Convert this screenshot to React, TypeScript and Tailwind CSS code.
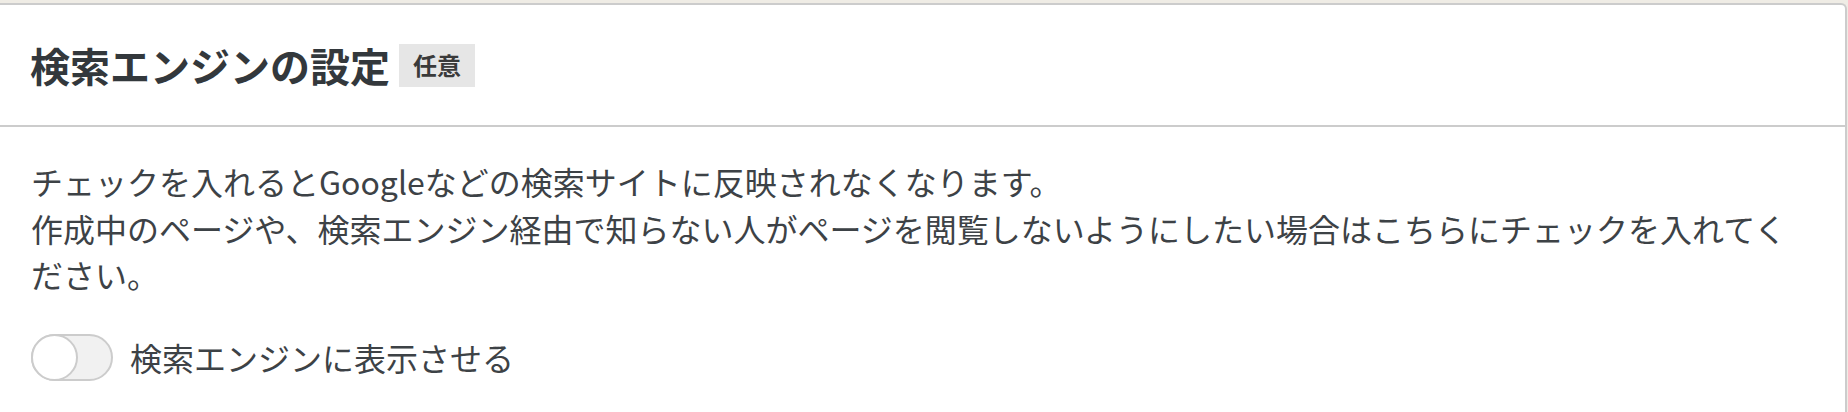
import { useState } from "react";

export default function App() {
  const [visible, setVisible] = useState(false);

  return (
    <div className="min-h-screen bg-white">
      <div className="bg-[#efece5] pt-[3px]">
        <section
          className="-ml-[2px] mr-[1px] rounded-tr-[6px] border-2 border-b-0 border-[#cccccc] bg-white text-[#3d4246]"
          style={{ fontFamily: '"Noto Sans CJK JP", "Noto Sans", sans-serif' }}
        >
          <header className="flex h-[122px] items-center gap-[9px] border-b-2 border-[#cccccc] px-[30px]">
            <h2 className="text-[40px] leading-none font-bold text-[#33383c]">検索エンジンの設定</h2>
            <span className="flex h-[43px] items-center bg-[#e6e6e6] px-[14px] text-[24px] font-bold text-[#3a3a3a]">
              任意
            </span>
          </header>

          <div className="pb-10 pl-[31px] pr-[40px] pt-[31px]">
            <p className="text-[32px] leading-[46.5px]">
              チェックを入れるとGoogleなどの検索サイトに反映されなくなります。
              <br />
              作成中のページや、検索エンジン経由で知らない人がページを閲覧しないようにしたい場合はこちらにチェックを入れてください。
            </p>

            <label className="mt-[36px] flex cursor-pointer items-center gap-[17px]">
              <button
                type="button"
                role="switch"
                aria-checked={visible}
                onClick={() => setVisible((v) => !v)}
                className={
                  visible
                    ? "relative flex h-[47px] w-[82px] items-center justify-end rounded-full border-2 border-[#4cae4c] bg-[#5cb85c]"
                    : "relative flex h-[47px] w-[82px] items-center rounded-full border-2 border-[#cccccc] bg-[#f1f1f1]"
                }
              >
                <span className="-m-[2px] block h-[47px] w-[47px] rounded-full border-2 border-[#cccccc] bg-white" />
              </button>
              <span className="text-[32px] leading-[47px]">検索エンジンに表示させる</span>
            </label>
          </div>
        </section>
      </div>
    </div>
  );
}
